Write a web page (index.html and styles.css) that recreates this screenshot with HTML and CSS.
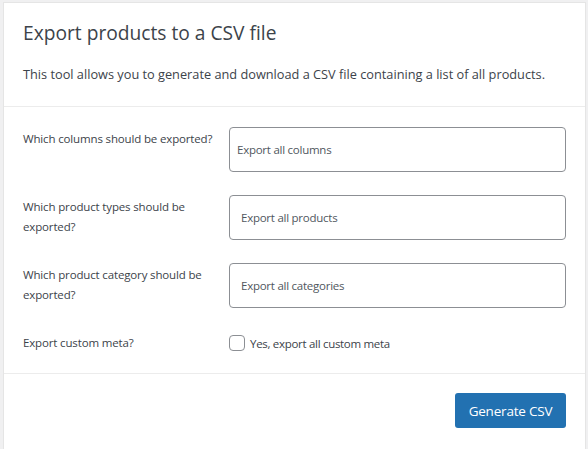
FILE: index.html
```html
<!DOCTYPE html>
<html lang="en">
<head>
<meta charset="utf-8">
<title>Export products</title>
<link rel="stylesheet" href="styles.css">
</head>
<body>
<div class="card">
  <header class="head">
    <h2 class="title">Export products to a CSV file</h2>
    <p class="desc">This tool allows you to generate and download a CSV file containing a list of all products.</p>
  </header>
  <section class="form">
    <div class="row">
      <label class="label">Which columns should be exported?</label>
      <div class="field field-multi">Export all columns</div>
    </div>
    <div class="row">
      <label class="label">Which product types should be exported?</label>
      <div class="field">Export all products</div>
    </div>
    <div class="row">
      <label class="label">Which product category should be exported?</label>
      <div class="field">Export all categories</div>
    </div>
    <div class="row row-check">
      <label class="label">Export custom meta?</label>
      <label class="check"><span class="box"></span>Yes, export all custom meta</label>
    </div>
  </section>
  <footer class="foot">
    <button class="btn">Generate CSV</button>
  </footer>
</div>
</body>
</html>
```
FILE: styles.css
```css
html, body { margin: 0; padding: 0; }
body {
  background: #f0f0f1;
  font-family: "Open Sans", "Noto Sans", sans-serif;
  color: #3c434a;
  padding: 2px 2px 0 3px;
  height: 449px;
  box-sizing: border-box;
  overflow: hidden;
}
.card {
  background: #fff;
  border: 1px solid #e5e5e5;
  border-bottom: none;
  height: 100%;
  box-sizing: border-box;
}
.head {
  padding: 16px 19px 0 19px;
  height: 104px;
  box-sizing: border-box;
  border-bottom: 1px solid #ececec;
}
.title {
  margin: 0;
  font-size: 19.2px;
  font-weight: 400;
  line-height: 28px;
  color: #3c434a;
}
.desc {
  margin: 17px 0 0;
  font-size: 12.75px;
  line-height: 20px;
  color: #3c434a;
}
.form {
  padding: 20px 19px 0 19px;
  display: flex;
  flex-direction: column;
  gap: 23px;
  height: 267px;
  box-sizing: border-box;
  border-bottom: 1px solid #ececec;
}
.row {
  display: grid;
  grid-template-columns: 206px 1fr;
  align-items: start;
}
.label {
  font-size: 11.5px;
  letter-spacing: -0.15px;
  line-height: 20px;
  color: #3c434a;
  padding-top: 2px;
  padding-right: 12px;
}
.field {
  height: 45px;
  box-sizing: border-box;
  border: 1px solid #8c8f94;
  border-radius: 4px;
  padding: 0 11px;
  display: flex;
  align-items: center;
  font-size: 11.5px;
  letter-spacing: -0.25px;
  color: #50575e;
}
.field-multi { padding-left: 7px; }
.row-check { align-items: center; margin-top: 2px; }
.row-check .label { padding-top: 0; }
.check {
  display: flex;
  align-items: center;
  gap: 5px;
  font-size: 11.5px;
  letter-spacing: -0.3px;
  color: #3c434a;
}
.box {
  width: 16px;
  height: 16px;
  box-sizing: border-box;
  border: 1px solid #8c8f94;
  border-radius: 4px;
  display: inline-block;
}
.foot {
  display: flex;
  justify-content: flex-end;
  padding: 19px 19px 0 0;
}
.btn {
  background: #2271b1;
  color: #fff;
  border: none;
  border-radius: 3px;
  width: 111px;
  height: 35px;
  font-family: inherit;
  font-size: 13.5px;
  letter-spacing: -0.2px;
  padding: 0;
}
```
